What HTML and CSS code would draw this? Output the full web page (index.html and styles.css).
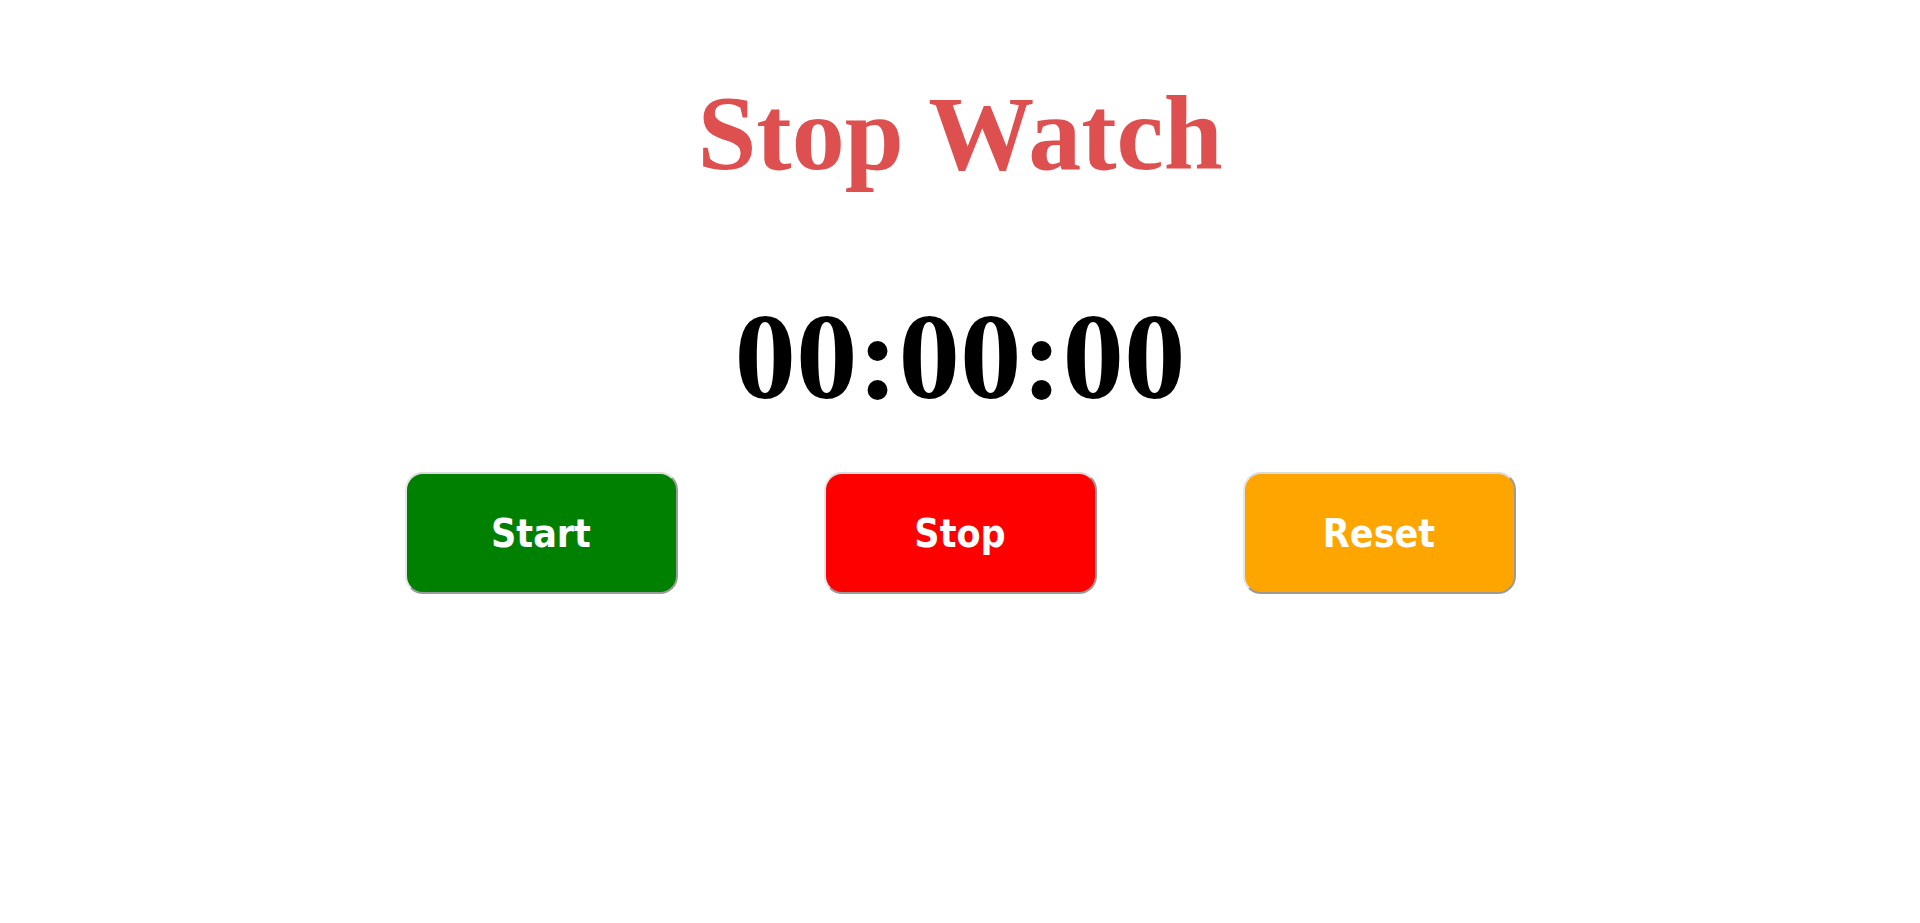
FILE: index.html
```html
<!DOCTYPE html>
<html>
<head>
<meta charset="utf-8">
<title>Stop Watch</title>
<link rel="stylesheet" href="styles.css">
</head>
<body>
<main class="watch">
  <h1 class="title">Stop Watch</h1>
  <div class="display">00:00:00</div>
  <div class="controls">
    <button class="btn btn-start">Start</button>
    <button class="btn btn-stop">Stop</button>
    <button class="btn btn-reset">Reset</button>
  </div>
</main>
</body>
</html>
```

FILE: styles.css
```css
html, body {
  margin: 0;
  padding: 0;
  background: #ffffff;
}

.watch {
  display: flex;
  flex-direction: column;
  align-items: center;
}

.title {
  margin: 81px 0 0 0;
  font-family: "Liberation Serif", "Times New Roman", serif;
  font-weight: bold;
  font-size: 106px;
  line-height: 1;
  color: #de5050;
}

.display {
  margin-top: 108px;
  font-family: "Liberation Serif", "Times New Roman", serif;
  font-weight: bold;
  font-size: 123px;
  line-height: 1;
  color: #000000;
}

.controls {
  margin-top: 54px;
  display: flex;
  gap: 146px;
}

.btn {
  box-sizing: border-box;
  width: 273px;
  height: 122px;
  border: 2px solid;
  border-color: #dcdcdc #9a9a9a #9a9a9a #e6e6e6;
  border-radius: 18px;
  font-family: "DejaVu Sans Condensed", "DejaVu Sans", sans-serif;
  font-weight: bold;
  font-size: 39px;
  color: #ffffff;
  padding: 0;
  cursor: pointer;
}

.btn-start { background: #008000; }
.btn-stop { background: #ff0000; }
.btn-reset { background: #ffa500; }
```
